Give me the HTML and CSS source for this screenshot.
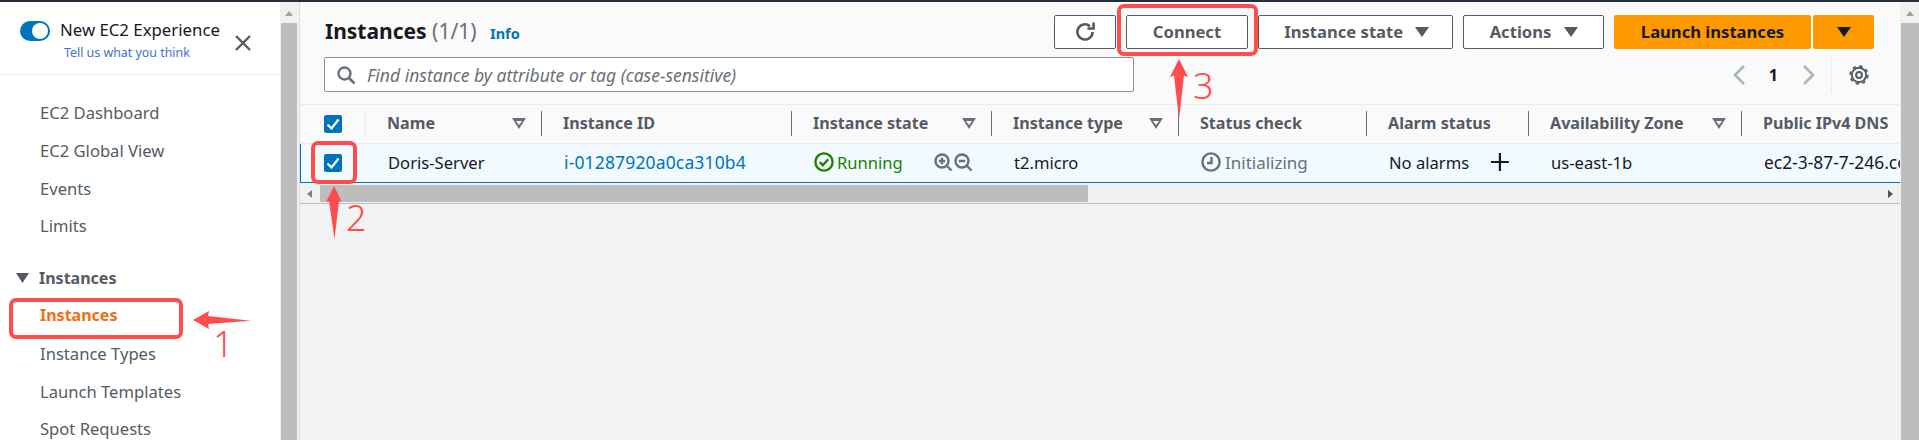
FILE: index.html
```html
<!DOCTYPE html>
<html lang="en">
<head>
<meta charset="utf-8">
<title>Instances | EC2</title>
<link rel="stylesheet" href="styles.css">
</head>
<body>
<div class="topbar"></div>
<div class="app">
  <aside class="sidebar">
    <div class="exp">
      <span class="toggle"><span class="knob"></span></span>
      <div class="exp-text">
        <div class="exp-title">New EC2 Experience</div>
        <a class="exp-link">Tell us what you think</a>
      </div>
      <svg class="close" width="18" height="18" viewBox="0 0 18 18"><path d="M2 2l14 14M16 2L2 16" stroke="#545b64" stroke-width="2.4" fill="none"/></svg>
    </div>
    <nav class="nav">
      <a class="nav-item">EC2 Dashboard</a>
      <a class="nav-item">EC2 Global View</a>
      <a class="nav-item">Events</a>
      <a class="nav-item">Limits</a>
      <div class="nav-head"><svg width="13" height="10" viewBox="0 0 13 10"><path d="M0 0h13L6.5 10z" fill="#545b64"/></svg>Instances</div>
      <a class="nav-item active">Instances</a>
      <a class="nav-item">Instance Types</a>
      <a class="nav-item">Launch Templates</a>
      <a class="nav-item">Spot Requests</a>
    </nav>
  </aside>
  <div class="vscroll"><span class="arrow-up"></span><span class="thumb"></span></div>
  <main class="main">
    <section class="head">
      <div class="head-row first-row">
        <h1 class="title">Instances <span class="count">(1/1)</span> <a class="info">Info</a></h1>
        <div class="actions">
          <button class="btn btn-refresh"><svg width="22" height="22" viewBox="0 0 22 22"><path d="M18.6 11a7.6 7.6 0 1 1-2.6-5.8" fill="none" stroke="#545b64" stroke-width="2.6"/><path d="M19.6 1.5v6h-6.2" fill="none" stroke="#545b64" stroke-width="2.6"/></svg></button>
          <button class="btn btn-connect">Connect</button>
          <button class="btn btn-state">Instance state<span class="caret"></span></button>
          <button class="btn btn-actions">Actions<span class="caret"></span></button>
          <div class="launch">
            <button class="btn-primary btn-launch">Launch instances</button>
            <button class="btn-primary btn-drop"><span class="caret dark"></span></button>
          </div>
        </div>
      </div>
      <div class="head-row second">
        <div class="search">
          <svg width="20" height="20" viewBox="0 0 20 20"><circle cx="8.5" cy="8.5" r="6" fill="none" stroke="#687078" stroke-width="2.4"/><path d="M13 13l5.5 5.5" stroke="#687078" stroke-width="2.6"/></svg>
          <span class="placeholder">Find instance by attribute or tag (case-sensitive)</span>
        </div>
        <div class="pager">
          <svg width="14" height="22" viewBox="0 0 14 22"><path d="M12 2L3 11l9 9" fill="none" stroke="#aab7b8" stroke-width="2.6"/></svg>
          <span class="page">1</span>
          <svg width="14" height="22" viewBox="0 0 14 22"><path d="M2 2l9 9-9 9" fill="none" stroke="#aab7b8" stroke-width="2.6"/></svg>
          <span class="pager-sep"></span>
          <svg class="gear" width="22" height="22" viewBox="0 0 22 22"><circle cx="11" cy="11" r="7.2" fill="none" stroke="#545b64" stroke-width="2"/><circle cx="11" cy="11" r="8.9" fill="none" stroke="#545b64" stroke-width="1.6" stroke-dasharray="3.4 3.59"/><circle cx="11" cy="11" r="2.9" fill="none" stroke="#545b64" stroke-width="2"/></svg>
        </div>
      </div>
    </section>
    <section class="table">
      <div class="tr thead">
        <div class="td check first"><span class="cb"><svg width="14" height="12" viewBox="0 0 14 12"><path d="M1.5 6.5l4 4 7-9" fill="none" stroke="#fff" stroke-width="2.2"/></svg></span></div>
        <div class="td"><span>Name</span><span class="sort"></span></div>
        <div class="td"><span>Instance ID</span></div>
        <div class="td"><span>Instance state</span><span class="sort"></span></div>
        <div class="td"><span>Instance type</span><span class="sort"></span></div>
        <div class="td"><span>Status check</span></div>
        <div class="td"><span>Alarm status</span></div>
        <div class="td"><span>Availability Zone</span><span class="sort"></span></div>
        <div class="td last"><span>Public IPv4 DNS</span></div>
      </div>
      <div class="tr tbody">
        <div class="td check"><span class="cb"><svg width="14" height="12" viewBox="0 0 14 12"><path d="M1.5 6.5l4 4 7-9" fill="none" stroke="#fff" stroke-width="2.2"/></svg></span></div>
        <div class="td">Doris-Server</div>
        <div class="td"><a class="link">i-01287920a0ca310b4</a></div>
        <div class="td state">
          <span class="running"><svg width="20" height="20" viewBox="0 0 20 20"><circle cx="10" cy="10" r="8.6" fill="none" stroke="#1d8102" stroke-width="2.4"/><path d="M5.8 10.2l3 3 5.4-6" fill="none" stroke="#1d8102" stroke-width="2.4"/></svg>Running</span>
          <span class="zooms"><svg width="19" height="19" viewBox="0 0 19 19"><circle cx="8" cy="8" r="6.5" fill="none" stroke="#687078" stroke-width="2.4"/><path d="M12.5 12.5l5 5M8 4.8v6.4M4.8 8h6.4" stroke="#687078" stroke-width="2.4"/></svg><svg width="19" height="19" viewBox="0 0 19 19"><circle cx="8" cy="8" r="6.5" fill="none" stroke="#687078" stroke-width="2.4"/><path d="M12.5 12.5l5 5M4.8 8h6.4" stroke="#687078" stroke-width="2.4"/></svg></span>
        </div>
        <div class="td">t2.micro</div>
        <div class="td status"><svg width="20" height="20" viewBox="0 0 20 20"><circle cx="10" cy="10" r="8.6" fill="none" stroke="#687078" stroke-width="2.4"/><path d="M10.5 5v6H6" fill="none" stroke="#687078" stroke-width="2.4"/></svg>Initializing</div>
        <div class="td alarm">No alarms<svg width="18" height="18" viewBox="0 0 18 18"><path d="M9 0v18M0 9h18" stroke="#16191f" stroke-width="2.2"/></svg></div>
        <div class="td">us-east-1b</div>
        <div class="td last dns">ec2-3-87-7-246.compute-1.amazonaws.com</div>
      </div>
      <div class="hscroll"><span class="arrow-left"></span><span class="hthumb"></span><span class="arrow-right"></span></div>
    </section>
    <section class="rest"></section>
  </main>
  <div class="vscroll right"><span class="arrow-up"></span><span class="thumb"></span></div>
</div>

<div class="mark mark-one"></div>
<div class="mark mark-two"></div>
<div class="mark mark-three"></div>
<svg class="arrows" width="1919" height="440" viewBox="0 0 1919 440">
  <path d="M193 320L209 311L208 316L251 320.7L208 324L209 329Z" />
  <path d="M334 186L342 202L339 201L334.5 239L329 201L326 202Z" />
  <path d="M1179 59L1188 77L1184 75.5L1179 119L1174 75.5L1170 77Z" />
</svg>
<span class="num num-one">1</span>
<span class="num num-two">2</span>
<span class="num num-three">3</span>
</body>
</html>
```
FILE: styles.css
```css
* { box-sizing: border-box; }
html, body { margin: 0; padding: 0; }
body {
  width: 1919px;
  height: 440px;
  overflow: hidden;
  position: relative;
  font-family: "Noto Sans", "Open Sans", sans-serif;
  font-size: 16.6px;
  color: #16191f;
  background: #f2f3f3;
}
.topbar { height: 2px; background: #232f3e; }
.app { display: flex; height: 438px; }

.sidebar { width: 280px; flex: none; background: #fff; overflow: hidden; }
.exp {
  display: flex;
  height: 73px;
  padding: 19px 0 0 20px;
  border-bottom: 1px solid #eaeded;
}
.toggle {
  width: 30px; height: 20px; border-radius: 10px; background: #0073bb;
  flex: none; display: flex; justify-content: flex-end; align-items: center; padding-right: 2px;
}
.knob { width: 16px; height: 16px; border-radius: 50%; background: #fff; }
.exp-text { margin-left: 10px; width: 175px; }
.exp-title { font-size: 16.8px; line-height: 20px; margin-top: -1px; white-space: nowrap; }
.exp-link { display: block; margin: 3px 0 0 4px; font-size: 12.4px; line-height: 20px; color: #3f6fd0; white-space: nowrap; }
.close { margin: 13px 0 0 -1px; flex: none; }

.nav { padding-top: 19px; display: flex; flex-direction: column; }
.nav-item { height: 37.8px; line-height: 37.8px; padding-left: 40px; color: #545b64; white-space: nowrap; }
.nav-item.active { color: #ec7211; font-weight: 700; font-size: 16px; }
.nav-head {
  margin-top: 14px;
  height: 37.8px; display: flex; align-items: center; gap: 10px; padding-left: 16px;
  font-weight: 700; font-size: 16px; color: #545b64;
}

.vscroll { width: 20px; flex: none; background: #f1f1f1; border-right: 1px solid #dcdcdc; padding: 0 2px 0 1px; display: flex; flex-direction: column; align-items: stretch; }
.vscroll.right { width: 19px; border-right: 0; padding: 0 0 0 1px; }
.arrow-up { width: 0; height: 0; margin: 9px auto 7px; border: 4px solid transparent; border-top: 0; border-bottom: 5px solid #a0a0a0; }
.thumb { flex: 1; background: #bdbdbd; }

.main { flex: 1; min-width: 0; display: flex; flex-direction: column; }
.head { height: 103px; background: #fafafa; padding: 13px 26px 0 25px; border-bottom: 1px solid #eaeded; }
.head-row { display: flex; justify-content: space-between; align-items: center; }
.first-row { height: 34px; }
.head-row.second { margin-top: 8px; margin-left: -1px; }
.title { margin: 0; font-size: 21px; font-weight: 700; line-height: 32px; white-space: nowrap; }
.count { font-weight: 400; color: #687078; }
.info { font-size: 14.5px; font-weight: 700; color: #0073bb; margin-left: 8px; }
.actions { display: flex; align-items: stretch; height: 34px; }
.btn {
  height: 34px; border: 1px solid #545b64; border-radius: 2px; background: #fff;
  font: 700 16.6px "Noto Sans", sans-serif; color: #545b64; display: flex; align-items: center; justify-content: center; padding: 0 0 1px;
}
.btn-refresh { width: 62px; margin-right: 10px; }
.btn-connect { width: 122px; margin-right: 10px; }
.btn-state { width: 195px; margin-right: 10px; gap: 11.6px; padding-left: 2px; }
.btn-actions { width: 141px; margin-right: 10px; gap: 13px; padding-left: 1px; }
.caret { width: 0; height: 0; border: 7px solid transparent; border-bottom: 0; border-top: 10px solid #545b64; }
.caret.dark { border-top-color: #16191f; }
.launch { display: flex; gap: 2px; }
.btn-primary {
  height: 34px; border: 0; border-radius: 2px; background: #ff9900; color: #16191f;
  font: 700 16.6px "Noto Sans", sans-serif; padding: 0 0 1px; display: flex; align-items: center; justify-content: center;
}
.btn-launch { width: 197px; }
.btn-drop { width: 61px; }

.search {
  width: 810px; height: 35px; background: #fff; border: 1px solid #879596; border-radius: 2px;
  display: flex; align-items: center; gap: 11px; padding-left: 11px;
}
.placeholder { font-style: italic; color: #687078; font-size: 17.5px; white-space: nowrap; }
.pager { display: flex; align-items: center; height: 35px; margin-right: 4px; }
.page { font-weight: 700; font-size: 16px; margin: 0 24px 0 23px; }
.pager-sep { width: 1px; height: 36px; background: #eaeded; margin: 0 16px 0 15px; }

.table { background: #fafafa; }
.tr { display: grid; grid-template-columns: 66px 176px 250px 200px 187px 188px 162px 213px 157px; overflow: hidden; }
.thead { height: 39px; background: #fafafa; border-bottom: 1px solid #eaeded; }
.thead .td {
  font-weight: 700; font-size: 16.1px; color: #545b64; display: flex; align-items: center; justify-content: space-between;
  padding: 0 16px 2px 21px; position: relative; white-space: nowrap;
}
.thead .td::after { content: ""; position: absolute; right: 0; top: 6px; bottom: 7px; width: 1px; background: #687078; }
.thead .td.check::after { background: #eaeded; }
.thead .td.last::after { display: none; }
.sort { width: 0; height: 0; border: 7px solid transparent; border-bottom: 0; border-top: 11px solid #687078; position: relative; flex: none; }
.sort::after { content: ""; position: absolute; left: -3px; top: -8px; width: 0; height: 0; border: 3px solid transparent; border-bottom: 0; border-top: 4px solid #fafafa; }
.tbody { height: 39px; background: #f1faff; border-bottom: 1px solid #0073bb; border-left: 1px solid #0073bb; }
.tbody .td { display: flex; align-items: center; padding: 0 21px 2px; white-space: nowrap; color: #16191f; }
.td.check { padding: 0 0 0 24px !important; align-items: center; }
.tbody .td.check { padding-left: 23px !important; }
.cb { width: 18px; height: 18px; background: #0073bb; border-radius: 2px; display: flex; align-items: center; justify-content: center; }
.link { color: #0073bb; font-size: 17.5px; letter-spacing: .15px; }
.dns { font-size: 17.4px; }
.state { justify-content: space-between; padding-right: 20px !important; }
.running { color: #1d8102; display: flex; align-items: center; gap: 3px; }
.zooms { display: flex; gap: 1px; }
.status { color: #687078 !important; gap: 4px; font-size: 17px; }
.alarm { gap: 22px; }
.hscroll { height: 21px; background: #f1f1f1; border-bottom: 1px solid #bdbdbd; display: flex; align-items: stretch; padding-top: 2px; padding-bottom: 1px; }
.arrow-left { width: 0; height: 0; margin: 5px 6px 0 7px; border: 4px solid transparent; border-left: 0; border-right: 5px solid #7f7f7f; flex: none; }
.hthumb { width: 768px; margin-left: 2px; background: #bdbdbd; }
.arrow-right { width: 0; height: 0; margin: 5px 7px 0 auto; border: 4px solid transparent; border-right: 0; border-left: 5px solid #505050; }
.rest { flex: 1; background: #f2f3f3; }

.mark { position: absolute; border: 4.5px solid #ff4d4d; border-radius: 7px; }
.mark-one { left: 9px; top: 298px; width: 174px; height: 41px; }
.mark-two { left: 311px; top: 141px; width: 45.5px; height: 42.5px; }
.mark-three { left: 1116.5px; top: 4px; width: 141.5px; height: 52px; }
.arrows { position: absolute; left: 0; top: 0; pointer-events: none; fill: #ff4d4d; }
.num { position: absolute; color: #ff4d4d; font-size: 36px; line-height: 44px; font-weight: 300; font-family: "Noto Sans", sans-serif; }
.num-one { left: 213px; top: 322px; }
.num-two { left: 346px; top: 196px; }
.num-three { left: 1193px; top: 63.5px; }
```
